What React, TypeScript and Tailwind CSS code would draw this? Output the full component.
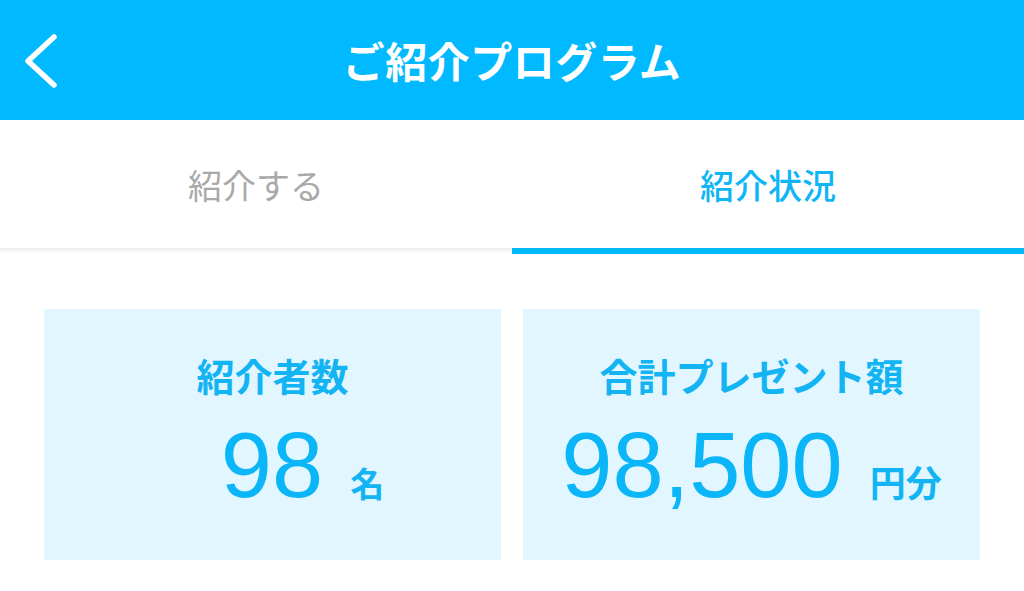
import React from 'react'

const jp = "font-['Noto_Sans_CJK_JP','Noto_Sans',sans-serif]"
const num = "font-['Liberation_Sans','Noto_Sans_CJK_JP',sans-serif]"

function StatCard({ label, value, unit, unitSize, shift }: { label: string; value: string; unit: string; unitSize: string; shift?: boolean }) {
  return (
    <div className="h-[251px] bg-[#e2f6ff] flex flex-col items-center pt-[46px]">
      <div className={`${jp} text-[38px] leading-[40px] font-bold text-[#12b4f3]`}>{label}</div>
      <div className={`flex items-baseline mt-[24px] ${shift ? 'pl-[60px]' : ''}`}>
        <span className={`${num} text-[92px] leading-none text-[#0bb6f8]`}>{value}</span>
        <span className={`${jp} ${unitSize} leading-none font-bold text-[#12b4f3] ml-[27px]`}>{unit}</span>
      </div>
    </div>
  )
}

export default function App() {
  return (
    <div className={`w-[1024px] h-[591px] bg-white overflow-hidden ${jp}`}>
      {/* Header */}
      <div className="h-[120px] bg-[#00b9ff] flex items-center">
        <div className="w-[100px] pl-[20px] flex items-center">
          <svg width="44" height="60" viewBox="0 0 44 60" fill="none">
            <polyline points="34,7 8,31 34,55" stroke="white" strokeWidth="5.5" strokeLinecap="round" strokeLinejoin="round" />
          </svg>
        </div>
        <div className="flex-1 text-center text-white text-[42px] font-bold leading-none tracking-[0.5px]">ご紹介プログラム</div>
        <div className="w-[100px]" />
      </div>

      {/* Tabs */}
      <div className="grid grid-cols-2">
        <div className="flex flex-col">
          <div className="h-[128px] flex items-center justify-center text-[34px] text-[#a9a9a9]">紹介する</div>
          <div className="h-[6px] bg-gradient-to-b from-[#ececec] to-white" />
        </div>
        <div className="flex flex-col">
          <div className="h-[128px] flex items-center justify-center text-[34px] font-medium text-[#0fb5f5]">紹介状況</div>
          <div className="h-[6px] bg-[#00b9ff]" />
        </div>
      </div>

      {/* Stats */}
      <div className="grid grid-cols-2 gap-[22px] px-[44px] pt-[55px]">
        <StatCard label="紹介者数" value="98" unit="名" unitSize="text-[34px]" shift />
        <StatCard label="合計プレゼント額" value="98,500" unit="円分" unitSize="text-[36px]" />
      </div>
    </div>
  )
}
